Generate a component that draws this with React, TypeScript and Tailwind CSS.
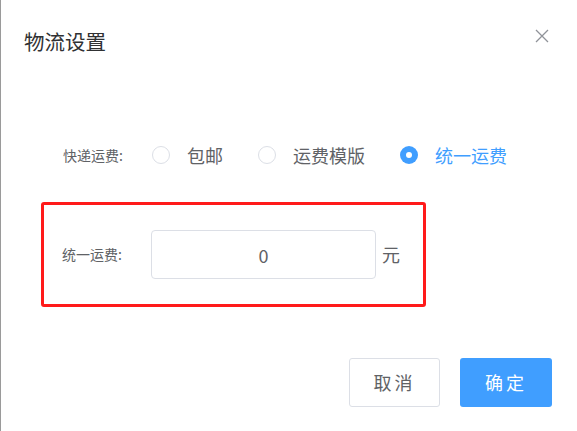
import React, { useState } from 'react';

const font = { fontFamily: '"Noto Sans CJK SC", "Noto Sans", sans-serif' };

const options = ['包邮', '运费模版', '统一运费'];

const Radio: React.FC<{ label: string; checked: boolean; onClick: () => void }> = ({ label, checked, onClick }) => (
  <label onClick={onClick} className="flex items-center cursor-pointer mr-[35px]">
    {checked ? (
      <span className="w-[18px] h-[18px] rounded-full bg-[#409eff] flex items-center justify-center">
        <span className="w-[6px] h-[6px] rounded-full bg-white" />
      </span>
    ) : (
      <span className="w-[18px] h-[18px] rounded-full border border-[#dcdfe6] bg-white" />
    )}
    <span className={`ml-[17px] text-[18px] leading-[24px] ${checked ? 'text-[#409eff]' : 'text-[#606266]'}`}>{label}</span>
  </label>
);

const App: React.FC = () => {
  const [type, setType] = useState(2);
  const [fee, setFee] = useState('0');

  return (
    <div style={font} className="w-[577px] h-[431px] bg-white border-l border-[#9a9a9a] overflow-hidden">
      <div className="flex justify-between items-start pl-[23px] pr-[28px] pt-[27px]">
        <h2 className="text-[20.5px] leading-[28px] text-[#303133]">物流设置</h2>
        <button className="mt-[2px] text-[#909399]">
          <svg width="14" height="14" viewBox="0 0 14 14" fill="none" stroke="currentColor" strokeWidth="1.3">
            <path d="M1 1 L13 13 M13 1 L1 13" />
          </svg>
        </button>
      </div>

      <div className="flex items-center pl-[62px] mt-[88px] h-[24px]">
        <span className="text-[14px] text-[#606266] w-[89px]">快递运费:</span>
        {options.map((o, i) => (
          <Radio key={o} label={o} checked={type === i} onClick={() => setType(i)} />
        ))}
      </div>

      <div className="ml-[40px] mt-[35px] w-[385px] h-[105px] border-[3px] border-[#ff1a1a] rounded-[3px] flex items-center pl-[18px]">
        <span className="text-[14px] text-[#606266] w-[89px]">统一运费:</span>
        <input
          value={fee}
          onChange={e => setFee(e.target.value)}
          className="w-[225px] h-[49px] border border-[#dcdfe6] rounded-[4px] text-center text-[18px] text-[#606266] outline-none"
        />
        <span className="ml-[6px] text-[18px] text-[#606266]">元</span>
      </div>

      <div className="flex justify-end gap-[20px] pr-[25px] mt-[51px]">
        <button className="w-[91px] h-[49px] border border-[#dcdfe6] rounded-[3px] bg-white text-[18px] tracking-[3px] text-[#606266]">取消</button>
        <button className="w-[92px] h-[49px] rounded-[3px] bg-[#409eff] text-[18px] tracking-[3px] text-white">确定</button>
      </div>
    </div>
  );
};

export default App;
